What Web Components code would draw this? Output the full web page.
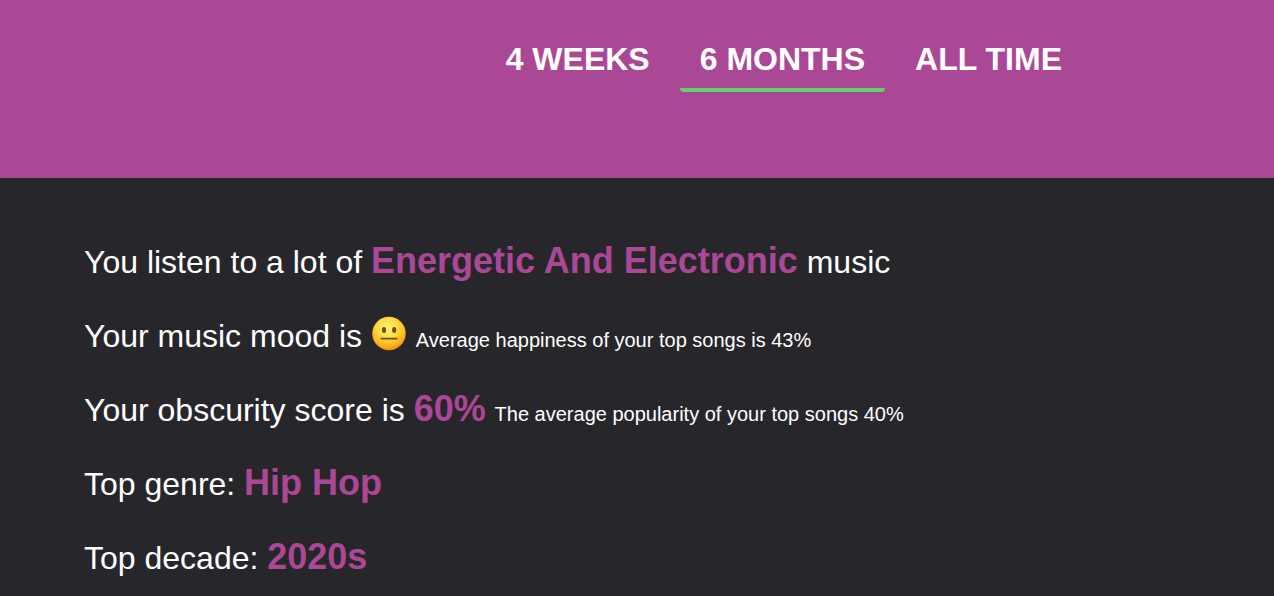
<!DOCTYPE html>
<html lang="en">
<head>
<meta charset="utf-8">
<title>Listening stats</title>
<style>
  html, body { margin: 0; min-height: 100%; background: #27262b; }
  body { font-family: "Liberation Sans", Arial, sans-serif; color: #fff; }
</style>
</head>
<body>
<stats-page></stats-page>
<script>
class TimeTab extends HTMLElement {
  connectedCallback() {
    const root = this.attachShadow({ mode: "open" });
    root.innerHTML = `
      <style>
        :host { display: block; }
        button {
          display: block; margin: 0; padding: 0 20px 9px; border: 0;
          background: none; color: inherit;
          font: bold 32px/40px "Liberation Sans", Arial, sans-serif;
          white-space: nowrap; cursor: pointer;
        }
        span { display: block; height: 4px; border-radius: 0 0 4px 4px; }
        :host([selected]) span { background: #67cf6b; }
      </style>
      <button type="button" aria-pressed="${this.hasAttribute("selected")}"><slot></slot></button>
      <span></span>`;
  }
}
customElements.define("time-tab", TimeTab);

class TimeTabs extends HTMLElement {
  connectedCallback() {
    const root = this.attachShadow({ mode: "open" });
    root.innerHTML = `
      <style>
        :host { display: block; background: #ab4896; padding: 39px 192px 86px 0; }
        nav { display: flex; justify-content: flex-end; gap: 10px; }
      </style>
      <nav aria-label="Time range"><slot></slot></nav>`;
  }
}
customElements.define("time-tabs", TimeTabs);

class MoodFace extends HTMLElement {
  connectedCallback() {
    const root = this.attachShadow({ mode: "open" });
    root.innerHTML = `
      <style>
        :host { display: inline-block; width: 36px; height: 36px; vertical-align: -5px; }
        svg { display: block; width: 100%; height: 100%; }
      </style>
      <svg viewBox="0 0 36 36" role="img" aria-label="Neutral face">
        <defs>
          <radialGradient id="skin" cx="46%" cy="34%" r="66%">
            <stop offset="0" stop-color="#fff07a"/>
            <stop offset=".4" stop-color="#ffdf4c"/>
            <stop offset=".78" stop-color="#ffb91f"/>
            <stop offset="1" stop-color="#f08a12"/>
          </radialGradient>
        </defs>
        <circle cx="18" cy="17.5" r="16.7" fill="url(#skin)"/>
        <ellipse cx="13" cy="14" rx="2.1" ry="2.9" fill="#7a4a0c"/>
        <ellipse cx="23.2" cy="14" rx="2.1" ry="2.9" fill="#7a4a0c"/>
        <path d="M10.4 22.6H25.8" stroke="#7a4a0c" stroke-width="1.9" stroke-linecap="round"/>
      </svg>`;
  }
}
customElements.define("mood-face", MoodFace);

class StatLine extends HTMLElement {
  connectedCallback() {
    const root = this.attachShadow({ mode: "open" });
    root.innerHTML = `
      <style>
        :host { display: block; }
        p { margin: 0; font-size: 32px; line-height: 42px; }
        ::slotted(strong) { font-size: 36px; line-height: 36px; color: #ab4896; }
        ::slotted(small) { font-size: 20px; line-height: 24px; }
      </style>
      <p><slot></slot></p>`;
  }
}
customElements.define("stat-line", StatLine);

class StatsPage extends HTMLElement {
  connectedCallback() {
    const root = this.attachShadow({ mode: "open" });
    root.innerHTML = `
      <style>
        :host { display: block; }
        main { display: flex; flex-direction: column; gap: 32px; padding: 63px 84px 16px; }
      </style>
      <time-tabs>
        <time-tab>4 WEEKS</time-tab>
        <time-tab selected>6 MONTHS</time-tab>
        <time-tab>ALL TIME</time-tab>
      </time-tabs>
      <main>
        <stat-line>You listen to a lot of <strong>Energetic And Electronic</strong> music</stat-line>
        <stat-line>Your music mood is <mood-face></mood-face> <small>Average happiness of your top songs is 43%</small></stat-line>
        <stat-line>Your obscurity score is <strong>60%</strong> <small>The average popularity of your top songs 40%</small></stat-line>
        <stat-line>Top genre: <strong>Hip Hop</strong></stat-line>
        <stat-line>Top decade: <strong>2020s</strong></stat-line>
      </main>`;
  }
}
customElements.define("stats-page", StatsPage);
</script>
</body>
</html>
